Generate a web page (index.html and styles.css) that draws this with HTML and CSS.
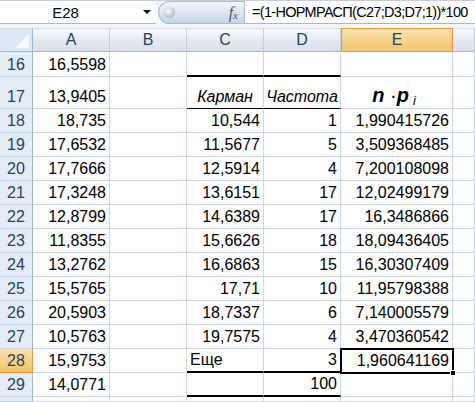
FILE: index.html
```html
<!DOCTYPE html>
<html lang="ru">
<head>
	<meta charset="UTF-8">
	<title>Карман</title>
	<link rel="stylesheet" href="styles.css">
</head>
<body>
	<div class="formulaBar">
		<div class="nameBox"><span class="name">E28</span><span class="drop"></span></div>
		<div class="fxBtn"><span class="knob"></span><span class="fx">f<sub>x</sub></span></div>
		<div class="formula">=(1-НОРМРАСП(C27;D3;D7;1))*100</div>
	</div>
	<div class="sheet">
		<div class="corner"><span class="tri"></span></div>
		<div class="ch">A</div><div class="ch">B</div><div class="ch">C</div><div class="ch">D</div><div class="ch sel">E</div><div class="ch"></div>

		<div class="rh">16</div><div class="c num">16,5598</div><div class="c"></div><div class="c thickB"></div><div class="c thickB"></div><div class="c"></div><div class="c"></div>

		<div class="rh tall">17</div><div class="c tall num">13,9405</div><div class="c tall"></div><div class="c tall thinB mid it">Карман</div><div class="c tall thinB mid it">Частота</div><div class="c tall mid np"><span><b>n</b>&nbsp;·<b>p</b><sub>i</sub></span></div><div class="c tall"></div>

		<div class="rh">18</div><div class="c num">18,735</div><div class="c"></div><div class="c num">10,544</div><div class="c num">1</div><div class="c num">1,990415726</div><div class="c"></div>
		<div class="rh">19</div><div class="c num">17,6532</div><div class="c"></div><div class="c num">11,5677</div><div class="c num">5</div><div class="c num">3,509368485</div><div class="c"></div>
		<div class="rh">20</div><div class="c num">17,7666</div><div class="c"></div><div class="c num">12,5914</div><div class="c num">4</div><div class="c num">7,200108098</div><div class="c"></div>
		<div class="rh">21</div><div class="c num">17,3248</div><div class="c"></div><div class="c num">13,6151</div><div class="c num">17</div><div class="c num">12,02499179</div><div class="c"></div>
		<div class="rh">22</div><div class="c num">12,8799</div><div class="c"></div><div class="c num">14,6389</div><div class="c num">17</div><div class="c num">16,3486866</div><div class="c"></div>
		<div class="rh">23</div><div class="c num">11,8355</div><div class="c"></div><div class="c num">15,6626</div><div class="c num">18</div><div class="c num">18,09436405</div><div class="c"></div>
		<div class="rh">24</div><div class="c num">13,2762</div><div class="c"></div><div class="c num">16,6863</div><div class="c num">15</div><div class="c num">16,30307409</div><div class="c"></div>
		<div class="rh">25</div><div class="c num">15,5765</div><div class="c"></div><div class="c num">17,71</div><div class="c num">10</div><div class="c num">11,95798388</div><div class="c"></div>
		<div class="rh">26</div><div class="c num">20,5903</div><div class="c"></div><div class="c num">18,7337</div><div class="c num">6</div><div class="c num">7,140005579</div><div class="c"></div>
		<div class="rh">27</div><div class="c num">10,5763</div><div class="c"></div><div class="c num">19,7575</div><div class="c num">4</div><div class="c num">3,470360542</div><div class="c"></div>
		<div class="rh sel">28</div><div class="c num">15,9753</div><div class="c"></div><div class="c thickB">Еще</div><div class="c num thickB">3</div><div class="c num active">1,960641169<span class="handle"></span></div><div class="c"></div>
		<div class="rh">29</div><div class="c num">14,0771</div><div class="c"></div><div class="c thickB"></div><div class="c num thickB">100</div><div class="c"></div><div class="c"></div>
		<div class="rh"></div><div class="c"></div><div class="c"></div><div class="c"></div><div class="c"></div><div class="c"></div><div class="c"></div>
	</div>
</body>
</html>
```

FILE: styles.css
```css
*{margin: 0;padding: 0;box-sizing: border-box;}
body{
	width: 475px;
	height: 402px;
	overflow: hidden;
	background: #fff;
	font-family: "Liberation Sans", Arial, sans-serif;
	font-size: 16px;
	color: #000;
}

/* строка формул */
.formulaBar{
	display: flex;
	height: 28px;
	padding-bottom: 4px;
	background: #f3f5f9;
	border-top: 1px solid #c5cdd8;
}
.nameBox{
	width: 156px;
	display: flex;
	align-items: center;
	background: #fff;
	border-bottom: 1px solid #a9b8cb;
}
.nameBox .name{
	flex: 1;
	text-align: center;
	font-size: 15px;
	padding-right: 12px;
}
.nameBox .drop{
	width: 0;
	height: 0;
	border-left: 4px solid transparent;
	border-right: 4px solid transparent;
	border-top: 4px solid #000;
	margin-right: 5px;
}
.fxBtn{
	width: 86px;
	margin-left: 2px;
	display: flex;
	align-items: center;
	justify-content: space-between;
	padding: 0 6px 0 5px;
	background: linear-gradient(#f4f7fc, #d6e1f0 60%, #c8d6ea);
	border: 1px solid #a9b9cf;
	border-right: none;
	border-radius: 12px 0 0 12px;
}
.fxBtn .knob{
	width: 11px;
	height: 11px;
	border-radius: 50%;
	background: radial-gradient(circle at 40% 35%, #fff, #b8bec6 70%, #9ea6b0);
}
.fxBtn .fx{
	font-family: "Liberation Serif", serif;
	font-style: italic;
	font-size: 16px;
	color: #4a5565;
}
.fxBtn .fx sub{
	font-size: 11px;
	vertical-align: -1px;
}
.formula{
	flex: 1;
	display: flex;
	align-items: center;
	padding-left: 7px;
	background: #fff;
	border-left: 1px solid #a9b9cf;
	border-bottom: 1px solid #a9b8cb;
	font-size: 14.5px;
	letter-spacing: -0.7px;
	white-space: nowrap;
	overflow: hidden;
}

/* лист */
.sheet{
	display: grid;
	grid-template-columns: 33px 77px 77px 77px 77px 112px 22px;
	grid-template-rows: 24px 25px 32px repeat(12, 24px) 5px;
	width: 475px;
	overflow: hidden;
}
.corner{
	background: #dde8f6;
	border-right: 1px solid #9eb6ce;
	border-bottom: 1px solid #9eb6ce;
	border-top: 1px solid #d5dde8;
	position: relative;
}
.corner .tri{
	position: absolute;
	right: 3px;
	bottom: 3px;
	width: 0;
	height: 0;
	border-left: 14px solid transparent;
	border-bottom: 14px solid #f6f9fd;
}
.ch{
	display: flex;
	align-items: center;
	justify-content: center;
	background: linear-gradient(#f7f9fc, #e4e9f1 55%, #d9e0ea);
	border-top: 1px solid #d5dde8;
	border-right: 1px solid #c5d1de;
	border-bottom: 1px solid #9eb6ce;
	color: #27415f;
	font-size: 16px;
}
.ch.sel{
	background: linear-gradient(#fbe3b0, #f7d38c 55%, #f2c46c);
	border: 1px solid #f29536;
}
.rh{
	display: flex;
	align-items: flex-end;
	justify-content: center;
	padding-bottom: 2px;
	line-height: 18px;
	background: #e4ecf7;
	border-right: 1px solid #9eb6ce;
	border-bottom: 1px solid #c5d1de;
	color: #27415f;
	font-size: 16px;
}
.rh.sel{
	background: linear-gradient(#fbe3b0, #f6d088 55%, #f2c46c);
	border-right: 1px solid #f29536;
	border-bottom: 1px solid #f29536;
}
.c{
	display: flex;
	align-items: flex-end;
	padding: 0 3px 2px 3px;
	line-height: 18px;
	border-right: 1px solid #d0d7e5;
	border-bottom: 1px solid #d0d7e5;
	white-space: nowrap;
	position: relative;
}
.num{justify-content: flex-end;}
.mid{justify-content: center;}
.it{font-style: italic;}
.thickB{border-bottom: 2px solid #000;}
.thinB{border-bottom: 1px solid #000;}
.np{
	font-style: italic;
	font-size: 20px;
	line-height: 20px;
	padding-bottom: 3px;
	padding-right: 8px;
}
.np sub{
	font-size: 13px;
	font-weight: normal;
	vertical-align: -3px;
	line-height: 0;
	margin-left: 4px;
}
.active{
	outline: 2px solid #000;
	outline-offset: -1px;
	z-index: 2;
}
.active .handle{
	position: absolute;
	right: -4px;
	bottom: -4px;
	width: 6px;
	height: 6px;
	background: #000;
	border: 1px solid #fff;
}
```
